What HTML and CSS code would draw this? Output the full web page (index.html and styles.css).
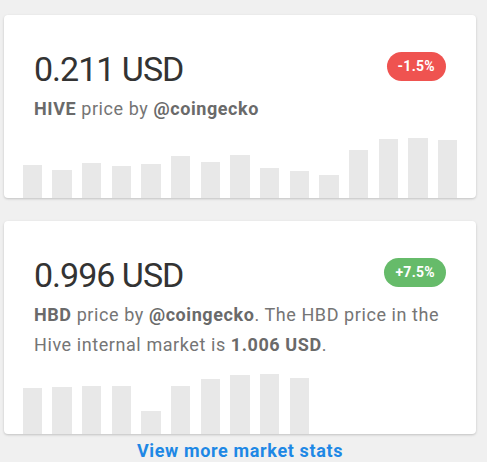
FILE: index.html
```html
<!DOCTYPE html>
<html>
<head>
	<title>Market</title>
	<link rel="stylesheet" href="styles.css">
</head>
<body>
	<div class="stats">
		<div class="card">
			<div class="head">
				<div class="price">0.211 USD</div>
				<span class="badge down">-1.5%</span>
			</div>
			<p class="desc"><b>HIVE</b> price by <b>@coingecko</b></p>
			<div class="chart">
				<div class="bar" style="height: 33px;"></div>
				<div class="bar" style="height: 28px;"></div>
				<div class="bar" style="height: 35px;"></div>
				<div class="bar" style="height: 32px;"></div>
				<div class="bar" style="height: 34px;"></div>
				<div class="bar" style="height: 42px;"></div>
				<div class="bar" style="height: 36px;"></div>
				<div class="bar" style="height: 43px;"></div>
				<div class="bar" style="height: 30px;"></div>
				<div class="bar" style="height: 27px;"></div>
				<div class="bar" style="height: 23px;"></div>
				<div class="bar" style="height: 48px;"></div>
				<div class="bar" style="height: 59px;"></div>
				<div class="bar" style="height: 60px;"></div>
				<div class="bar" style="height: 58px;"></div>
			</div>
		</div>
		<div class="card">
			<div class="head">
				<div class="price">0.996 USD</div>
				<span class="badge up">+7.5%</span>
			</div>
			<p class="desc"><b>HBD</b> price by <b>@coingecko</b>. The HBD price in the Hive internal market is <b>1.006 USD</b>.</p>
			<div class="chart">
				<div class="bar" style="height: 46px;"></div>
				<div class="bar" style="height: 47px;"></div>
				<div class="bar" style="height: 48px;"></div>
				<div class="bar" style="height: 48px;"></div>
				<div class="bar" style="height: 23px;"></div>
				<div class="bar" style="height: 48px;"></div>
				<div class="bar" style="height: 55px;"></div>
				<div class="bar" style="height: 59px;"></div>
				<div class="bar" style="height: 60px;"></div>
				<div class="bar" style="height: 56px;"></div>
				<div class="bar empty"></div>
				<div class="bar empty"></div>
				<div class="bar empty"></div>
				<div class="bar empty"></div>
				<div class="bar empty"></div>
			</div>
		</div>
		<a class="more" href="#">View more market stats</a>
	</div>
</body>
</html>
```

FILE: styles.css
```css
* {
	box-sizing: border-box;
}

body {
	margin: 0;
	padding: 15px 11px 0 4px;
	background-color: #f0f0f0;
	font-family: Roboto, "Liberation Sans", sans-serif;
}

.stats {
	display: flex;
	flex-direction: column;
	gap: 23px;
}

.card {
	background-color: #fff;
	border-radius: 4px;
	box-shadow: 0 1px 3px rgba(0, 0, 0, .12), 0 1px 2px rgba(0, 0, 0, .08);
	padding: 34px 30px 0 30px;
	overflow: hidden;
}

.head {
	display: flex;
	justify-content: space-between;
	align-items: flex-start;
}

.price {
	font-size: 34px;
	line-height: 40px;
	letter-spacing: -1px;
	color: #333;
}

.badge {
	margin-top: 3px;
	height: 29px;
	padding: 0 11px;
	border-radius: 15px;
	color: #fff;
	font-size: 14px;
	font-weight: bold;
	line-height: 29px;
	letter-spacing: .3px;
}

.badge.down {background-color: #ef5350;}
.badge.up {background-color: #66bb6a;}

.desc {
	margin: 5px 0 0 0;
	font-size: 18px;
	line-height: 29.4px;
	letter-spacing: .58px;
	color: #757575;
}

.desc b {
	color: #6a6a6a;
}

.chart {
	display: flex;
	align-items: flex-end;
	gap: 10.4px;
	height: 75px;
	margin: 0 -11.3px 0 -11.3px;
}

.bar {
	flex: 1;
	background-color: #e8e8e8;
}

.bar.empty {
	background-color: transparent;
}

.more {
	margin-top: -17px;
	text-align: center;
	color: #1e88e5;
	font-size: 18px;
	font-weight: bold;
	letter-spacing: .64px;
	text-decoration: none;
}
```
